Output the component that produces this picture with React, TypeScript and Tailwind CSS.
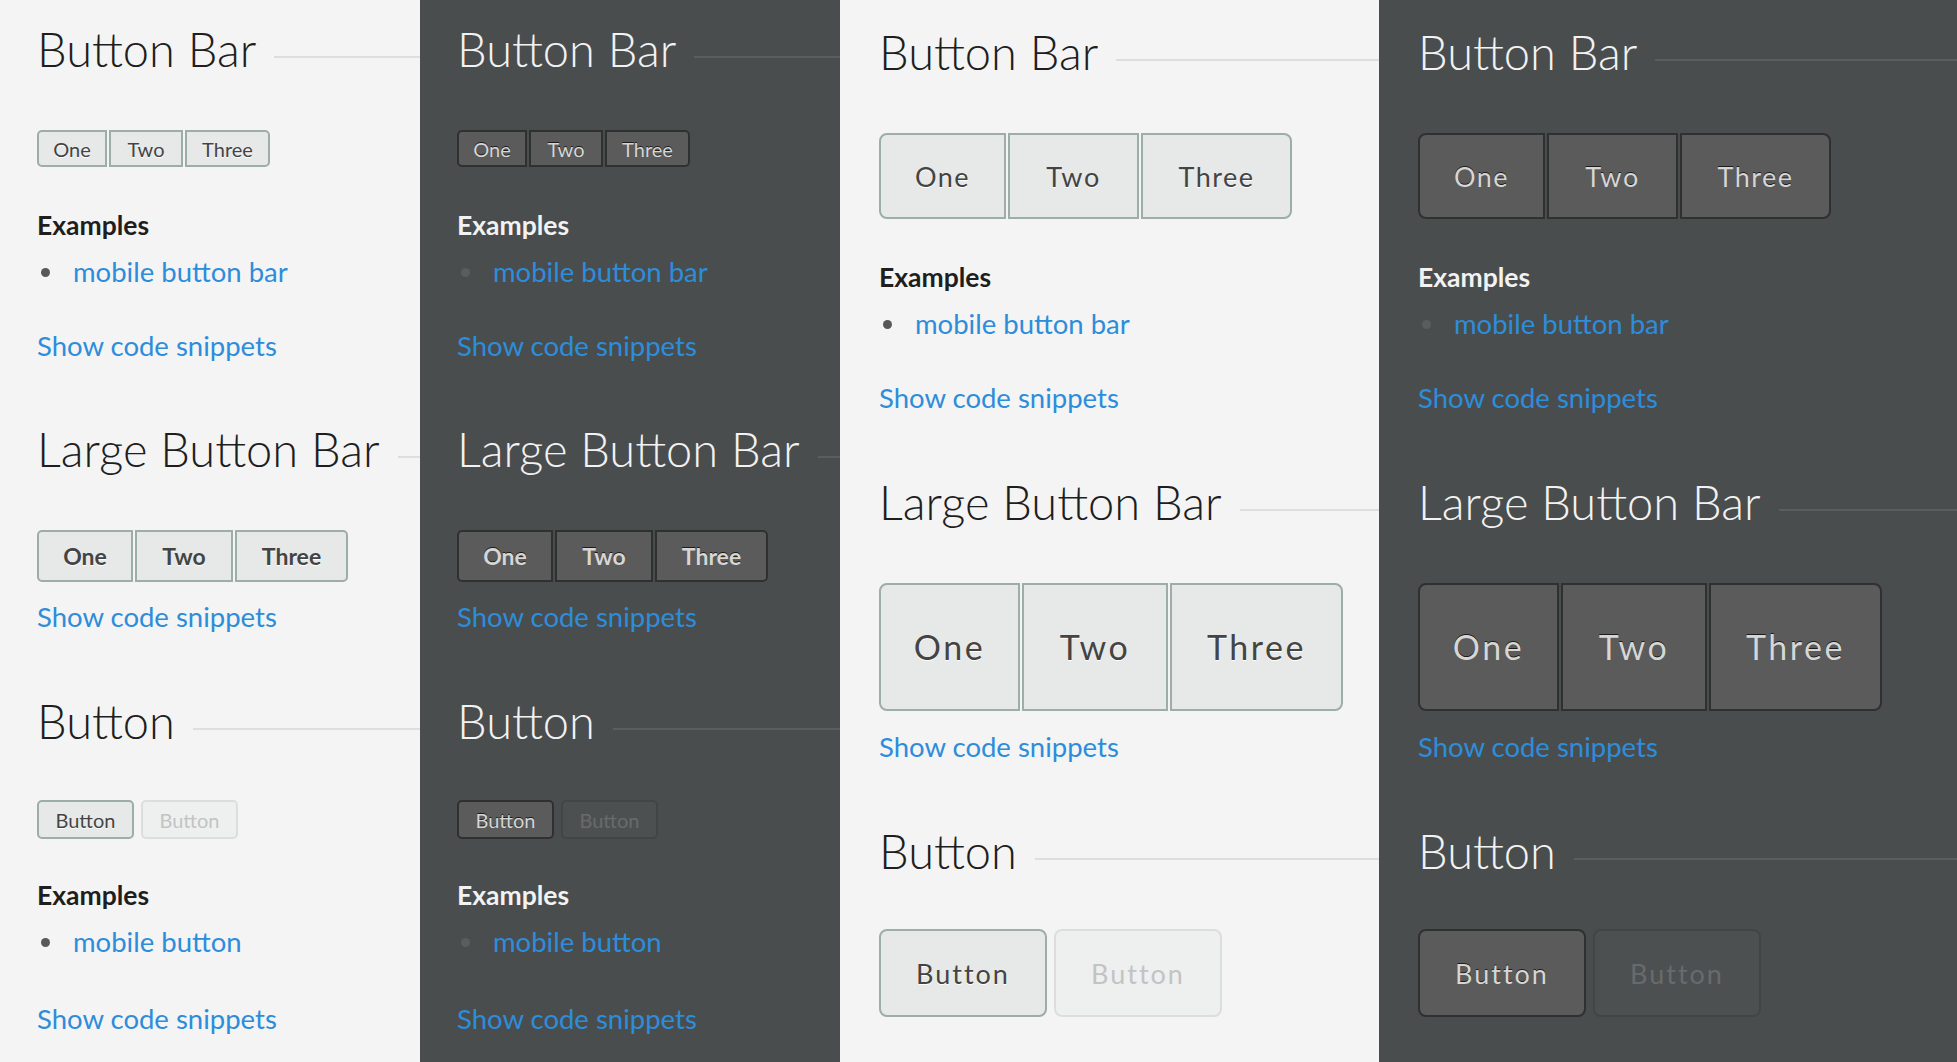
import type { ReactNode } from "react"

type Theme = "light" | "dark"
type Size = "compact" | "roomy"

const themes = {
  light: {
    bg: "bg-[#f4f4f4]",
    text: "text-[#1e1e1e]",
    rule: "bg-[#dedede]",
    dot: "bg-[#58585a]",
    btn: "bg-[#e6e9e8] border-[#9dada8] text-[#444444] [text-shadow:0_1px_0_#ffffff]",
    off: "bg-[#eef0ef] border-[#dcdedd] text-[#c3c3c3]",
  },
  dark: {
    bg: "bg-[#4a4d4e]",
    text: "text-[#f2f2f2]",
    rule: "bg-[#5b5e5f]",
    dot: "bg-[#5a5d5e]",
    btn: "bg-[#5a5b5a] border-[#2f3131] text-[#d6d6d6] [text-shadow:0_-1px_0_#1c1c1c]",
    off: "bg-[#4d5051] border-[#424546] text-[#686b6c]",
  },
}

const sizes = {
  compact: {
    pad: "pl-[37px] pt-[25px]",
    radius: "rounded-[5px]",
    first: "rounded-l-[5px]",
    last: "rounded-r-[5px]",
    bar: { h: "h-[37px]", text: "text-[20px]", widths: ["w-[70px]", "w-[74px]", "w-[85px]"] },
    large: { h: "h-[52px]", text: "text-[23px] font-bold", widths: ["w-[96px]", "w-[98px]", "w-[113px]"] },
    button: "h-[39px] w-[97px] text-[20px]",
    gaps: {
      bar: "mt-[57px]",
      examples: "mt-[45px]",
      list: "mt-[20px]",
      show: "mt-[46px]",
      next: "mt-[65px]",
      largeBar: "mt-[57px]",
      largeShow: "mt-[21px]",
      next2: "mt-[66px]",
      buttons: "mt-[55px]",
      examples2: "mt-[43px]",
      show2: "mt-[49px]",
    },
  },
  roomy: {
    pad: "pl-[39px] pt-[28px]",
    radius: "rounded-[8px]",
    first: "rounded-l-[8px]",
    last: "rounded-r-[8px]",
    bar: { h: "h-[86px]", text: "text-[27px] tracking-[1.5px]", widths: ["w-[127px]", "w-[131px]", "w-[151px]"] },
    large: { h: "h-[128px]", text: "text-[34px] tracking-[2.5px]", widths: ["w-[141px]", "w-[146px]", "w-[173px]"] },
    button: "h-[88px] w-[168px] text-[27px] tracking-[2px]",
    gaps: {
      bar: "mt-[57px]",
      examples: "mt-[45px]",
      list: "mt-[18px]",
      show: "mt-[46px]",
      next: "mt-[66px]",
      largeBar: "mt-[57px]",
      largeShow: "mt-[22px]",
      next2: "mt-[66px]",
      buttons: "mt-[54px]",
      examples2: "mt-[43px]",
      show2: "mt-[49px]",
    },
  },
}

function Heading({ title, theme, className }: { title: string; theme: Theme; className?: string }) {
  const t = themes[theme]
  return (
    <div className={`flex items-start ${className ?? ""}`}>
      <h2 className={`text-[47px] leading-[48px] font-light whitespace-nowrap ${t.text}`}>{title}</h2>
      <div className={`ml-[18px] mt-[31px] h-[2px] flex-1 ${t.rule}`} />
    </div>
  )
}

function ButtonBar({ theme, size, large, className }: { theme: Theme; size: Size; large?: boolean; className?: string }) {
  const t = themes[theme]
  const s = sizes[size]
  const cfg = large ? s.large : s.bar
  const labels = ["One", "Two", "Three"]
  return (
    <div className={`flex gap-[2px] ${className ?? ""}`}>
      {labels.map((label, i) => (
        <button
          key={label}
          className={`flex items-center justify-center border-2 leading-none ${cfg.h} ${cfg.widths[i]} ${cfg.text} ${t.btn} ${i === 0 ? s.first : ""} ${i === 2 ? s.last : ""}`}
        >
          {label}
        </button>
      ))}
    </div>
  )
}

function Examples({ theme, item, className }: { theme: Theme; item: string; className?: string }) {
  const t = themes[theme]
  return (
    <div className={className}>
      <h3 className={`text-[26.5px] leading-[26px] font-bold ${t.text}`}>Examples</h3>
      <ul className="mt-[20px]">
        <li className="flex h-[28px] items-center pl-[4px]">
          <span className={`h-[9px] w-[9px] rounded-full ${t.dot}`} />
          <a className="ml-[23px] text-[27.5px] leading-[28px] text-[#2d8ddb]">{item}</a>
        </li>
      </ul>
    </div>
  )
}

function Snippets({ className }: { className?: string }) {
  return <a className={`block text-[27.5px] leading-[28px] text-[#2d8ddb] ${className ?? ""}`}>Show code snippets</a>
}

function Column({ theme, size, width }: { theme: Theme; size: Size; width: string }) {
  const t = themes[theme]
  const s = sizes[size]
  const g = s.gaps
  return (
    <section className={`h-full shrink-0 ${width} ${t.bg} ${s.pad} overflow-hidden`}>
      <Heading title="Button Bar" theme={theme} />
      <ButtonBar theme={theme} size={size} className={g.bar} />
      <Examples theme={theme} item="mobile button bar" className={g.examples} />
      <Snippets className={g.show} />

      <Heading title="Large Button Bar" theme={theme} className={g.next} />
      <ButtonBar theme={theme} size={size} large className={g.largeBar} />
      <Snippets className={g.largeShow} />

      <Heading title="Button" theme={theme} className={g.next2} />
      <div className={`flex gap-[7px] ${g.buttons}`}>
        <button className={`flex items-center justify-center border-2 leading-none ${s.button} ${s.radius} ${t.btn}`}>Button</button>
        <button className={`flex items-center justify-center border-2 leading-none ${s.button} ${s.radius} ${t.off}`}>Button</button>
      </div>
      {size === "compact" && (
        <>
          <Examples theme={theme} item="mobile button" className={g.examples2} />
          <Snippets className={g.show2} />
        </>
      )}
    </section>
  )
}

export default function App(): ReactNode {
  return (
    <div className="flex h-[1062px] w-[1957px] overflow-hidden font-['Lato','Liberation_Sans',sans-serif]">
      <Column theme="light" size="compact" width="w-[420px]" />
      <Column theme="dark" size="compact" width="w-[420px]" />
      <Column theme="light" size="roomy" width="w-[539px]" />
      <Column theme="dark" size="roomy" width="w-[578px]" />
    </div>
  )
}
